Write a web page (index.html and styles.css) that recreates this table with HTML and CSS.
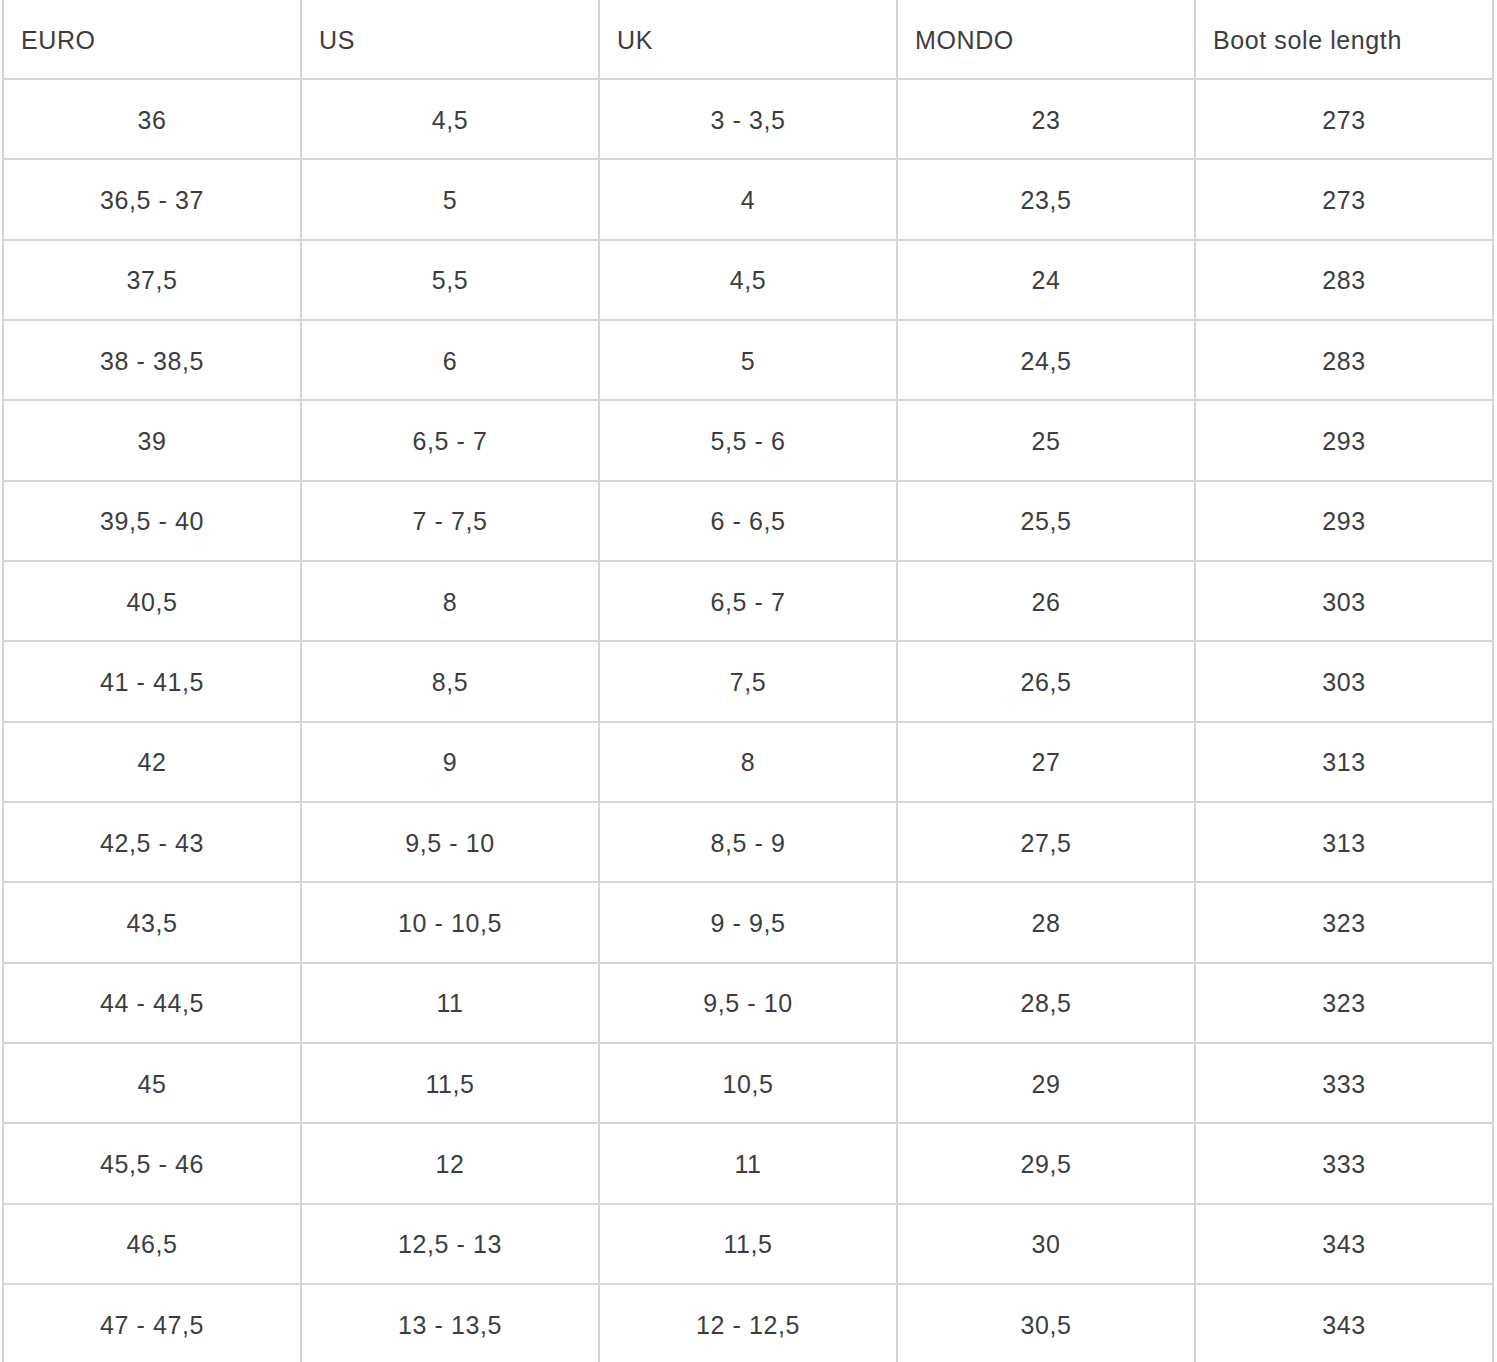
FILE: index.html
```html
<!DOCTYPE html>
<html lang="en">
<head>
<meta charset="utf-8">
<title>Size chart</title>
<link rel="stylesheet" href="styles.css">
</head>
<body>
<table class="size-table">
  <thead>
    <tr><th>EURO</th><th>US</th><th>UK</th><th>MONDO</th><th>Boot sole length</th></tr>
  </thead>
  <tbody>
    <tr><td>36</td><td>4,5</td><td>3 - 3,5</td><td>23</td><td>273</td></tr>
    <tr><td>36,5 - 37</td><td>5</td><td>4</td><td>23,5</td><td>273</td></tr>
    <tr><td>37,5</td><td>5,5</td><td>4,5</td><td>24</td><td>283</td></tr>
    <tr><td>38 - 38,5</td><td>6</td><td>5</td><td>24,5</td><td>283</td></tr>
    <tr><td>39</td><td>6,5 - 7</td><td>5,5 - 6</td><td>25</td><td>293</td></tr>
    <tr><td>39,5 - 40</td><td>7 - 7,5</td><td>6 - 6,5</td><td>25,5</td><td>293</td></tr>
    <tr><td>40,5</td><td>8</td><td>6,5 - 7</td><td>26</td><td>303</td></tr>
    <tr><td>41 - 41,5</td><td>8,5</td><td>7,5</td><td>26,5</td><td>303</td></tr>
    <tr><td>42</td><td>9</td><td>8</td><td>27</td><td>313</td></tr>
    <tr><td>42,5 - 43</td><td>9,5 - 10</td><td>8,5 - 9</td><td>27,5</td><td>313</td></tr>
    <tr><td>43,5</td><td>10 - 10,5</td><td>9 - 9,5</td><td>28</td><td>323</td></tr>
    <tr><td>44 - 44,5</td><td>11</td><td>9,5 - 10</td><td>28,5</td><td>323</td></tr>
    <tr><td>45</td><td>11,5</td><td>10,5</td><td>29</td><td>333</td></tr>
    <tr><td>45,5 - 46</td><td>12</td><td>11</td><td>29,5</td><td>333</td></tr>
    <tr><td>46,5</td><td>12,5 - 13</td><td>11,5</td><td>30</td><td>343</td></tr>
    <tr><td>47 - 47,5</td><td>13 - 13,5</td><td>12 - 12,5</td><td>30,5</td><td>343</td></tr>
  </tbody>
</table>
</body>
</html>
```

FILE: styles.css
```css
html, body {
  margin: 0;
  padding: 0;
  background: #ffffff;
}

body {
  padding-left: 2px;
  font-family: "Liberation Sans", Arial, sans-serif;
  color: #3d3d3d;
}

.size-table {
  border-collapse: separate;
  border-spacing: 0;
  table-layout: fixed;
  width: 1492px;
}

.size-table th,
.size-table td {
  box-sizing: border-box;
  width: 298px;
  border-right: 2px solid #d5d5d5;
  border-bottom: 2px solid #d5d5d5;
  font-size: 25px;
  font-weight: normal;
  letter-spacing: 0.6px;
  padding: 2px 0 0 0;
  vertical-align: middle;
}

.size-table th:first-child,
.size-table td:first-child {
  width: 300px;
  border-left: 2px solid #d5d5d5;
}

.size-table th {
  height: 80px;
  text-align: left;
  padding-left: 17px;
}

.size-table td {
  height: 80.33px;
  text-align: center;
}
```
